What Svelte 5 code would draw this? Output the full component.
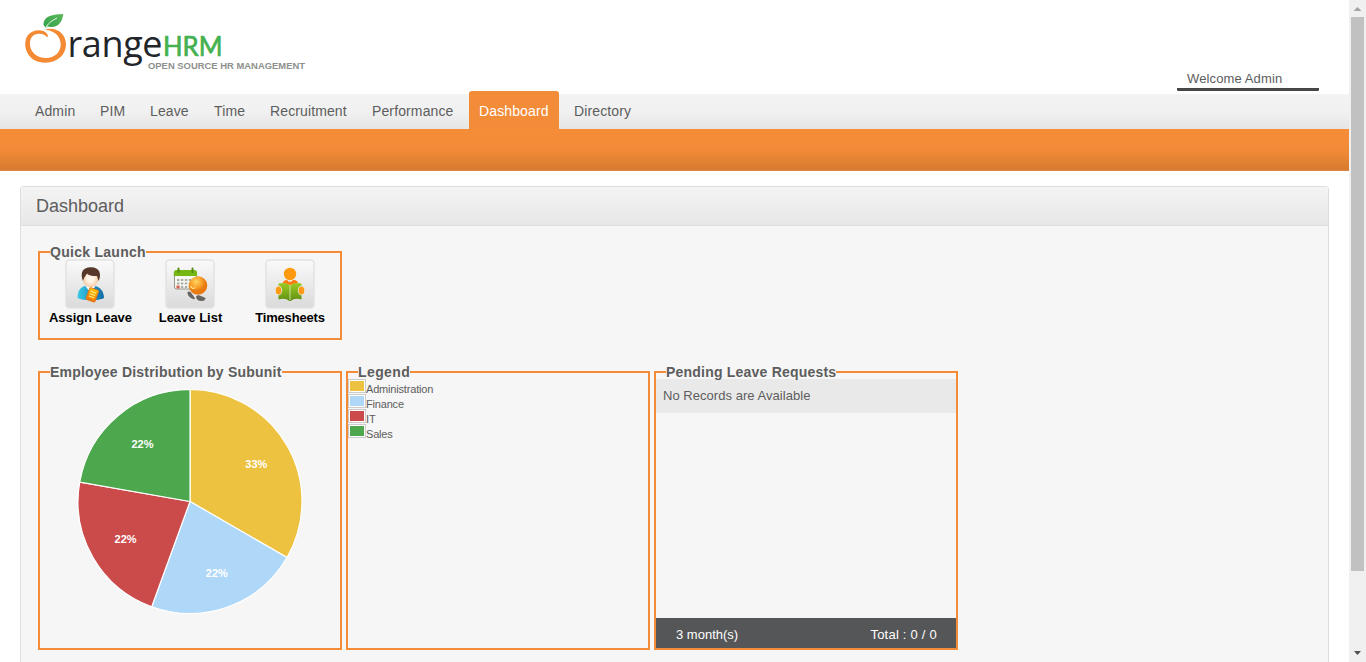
<script>
  const menu = [
    { label: 'Admin', w: 60 },
    { label: 'PIM', w: 45 },
    { label: 'Leave', w: 59 },
    { label: 'Time', w: 51 },
    { label: 'Recruitment', w: 97 },
    { label: 'Performance', w: 102 },
    { label: 'Dashboard', w: 90, active: true },
    { label: 'Directory', w: 77 }
  ];
  const units = [
    { name: 'Administration', color: '#edc240', count: 3 },
    { name: 'Finance', color: '#afd8f8', count: 2 },
    { name: 'IT', color: '#cb4b4b', count: 2 },
    { name: 'Sales', color: '#4da74d', count: 2 }
  ];
  const total = units.reduce((sum, u) => sum + u.count, 0);
  const point = (angle, r) => [
    113 + r * Math.sin(angle * 2 * Math.PI),
    112.5 - r * Math.cos(angle * 2 * Math.PI)
  ];
  let start = 0;
  const slices = units.map((u) => {
    const end = start + u.count / total;
    const [x1, y1] = point(start, 112);
    const [x2, y2] = point(end, 112);
    const [tx, ty] = point((start + end) / 2, 75.5);
    start = end;
    return {
      ...u, tx, ty,
      d: `M113 112.5L${x1} ${y1}A112 112 0 0 1 ${x2} ${y2}Z`,
      label: Math.floor((u.count / total) * 100) + '%'
    };
  });
</script>

<div class="window">
  <div class="page">
    <header>
      <svg class="logo" width="300" height="76" viewBox="0 0 300 76">
        <defs>
          <linearGradient id="leaf" x1="0" y1="1" x2="1" y2="0"><stop stop-color="#2fa04a" /><stop offset="1" stop-color="#5cb85a" /></linearGradient>
        </defs>
        <path fill="#f58a35" d="M32.500 37.500C33.500 35.500 32.500 33 29 31.300C24 29 17 30 13 35C9.500 39.500 9.500 47 12 52C15 59 22 62.700 30.500 62.700C42.500 62.700 51 54.500 51 44.500C51 35.500 44.500 28.800 35 28.800C33 28.800 31 29 29.800 29.600C38 30.500 45.500 35.500 45.700 44C45.800 52.500 39.500 58 31 58C22 58 15.500 52.500 15 44.500C14.600 37.500 18.500 33.800 24 33.800C28 33.800 30.500 35.200 32.500 37.500Z" />
        <path fill="url(#leaf)" d="M28.500 25C28 17 36 14.200 48.200 14C47.500 22 43 28.800 32 26.500L31 28Z" />
        <path fill="none" stroke="#fff" stroke-width=".9" d="M31 27C34 22.500 37 20.500 42 18" />
        <text class="word" x="52.500" y="57" textLength="95">range</text>
        <text class="hrm" x="148" y="56.200" textLength="59.500" lengthAdjust="spacingAndGlyphs">HRM</text>
        <text class="tagline" x="133" y="68.600" textLength="157" lengthAdjust="spacingAndGlyphs">OPEN SOURCE HR MANAGEMENT</text>
      </svg>
      <div class="welcome">Welcome Admin</div>
    </header>
    <nav>
      {#each menu as item}
        <a class:active={item.active} style:width="{item.w}px">{item.label}</a>
      {/each}
    </nav>
    <div class="submenu"></div>
    <main>
      <h1>Dashboard</h1>
      <div class="inner">
        <fieldset class="quick">
          <legend>Quick Launch</legend>
          <div class="launchers">
            <div class="launcher">
              <svg width="50" height="50" viewBox="0 0 50 50">
                <defs>
                  <linearGradient id="tile" x2="0" y2="1"><stop stop-color="#fafafa" /><stop offset="1" stop-color="#dadada" /></linearGradient>
                  <linearGradient id="shirt"><stop stop-color="#39c9e5" /><stop offset="1" stop-color="#126aa6" /></linearGradient>
                  <linearGradient id="card" x2="0" y2="1"><stop stop-color="#ffc20c" /><stop offset="1" stop-color="#ee7600" /></linearGradient>
                  <radialGradient id="face"><stop offset=".4" stop-color="#fff4e8" /><stop offset="1" stop-color="#f5c9a3" /></radialGradient>
                </defs>
                <rect x="1" y="1" width="48" height="48" rx="3.500" fill="url(#tile)" stroke="#e2e2df" stroke-width="1.500" />
                <path fill="url(#shirt)" d="M12.500 39C12.500 30 17 27.500 22 26.500L29 26.500C35 28 38.800 32 39 39C34 42 18 42 12.500 39Z" />
                <path fill="#fff" d="M20.500 27L25.500 34L30.500 27Z" />
                <ellipse cx="25.500" cy="19.500" rx="7.800" ry="9" fill="url(#face)" />
                <path fill="#573729" d="M18 22C14.500 13 18.500 8 26 8.200C34.500 8.300 37 15 33.500 22L32 17C28 17.300 24 16.500 22 14.500C20.500 17 19 18 18 22Z" />
                <g transform="rotate(20 27 36)"><rect x="22.500" y="29.500" width="9.500" height="12.500" rx="1" fill="url(#card)" stroke="#df6e14" stroke-width=".8" /><path stroke="#fff38a" stroke-width="1.100" d="M24.500 33H30M24.500 35.500H30M24.500 38H30" /></g>
              </svg>
              <span style:letter-spacing="-0.08px">Assign Leave</span>
            </div>
            <div class="launcher">
              <svg width="50" height="50" viewBox="0 0 50 50">
                <defs><radialGradient id="ball" cx=".4" cy=".3"><stop stop-color="#ffd565" /><stop offset=".6" stop-color="#f7a22a" /><stop offset="1" stop-color="#e97a11" /></radialGradient></defs>
                <rect x="1" y="1" width="48" height="48" rx="3.500" fill="url(#tile)" stroke="#e2e2df" stroke-width="1.500" />
                <rect x="9.500" y="12" width="22" height="18" rx="2" fill="#f6f7f1" stroke="#929887" />
                <path fill="#76b713" d="M8.800 17V13.500Q8.800 11 12 11H29Q32 11 32 13.500V17Z" />
                <path stroke="#558b0e" stroke-width="2" stroke-linecap="round" d="M13.500 9.500V13M27.500 9.500V13" />
                <path stroke="#aaaca7" stroke-width="2" stroke-dasharray="2.400 1.500" d="M12 21H31M12 24.500H31M12 28H31" />
                <rect x="11.500" y="26.500" width="3" height="3" fill="#dd6150" />
                <circle cx="33" cy="26.500" r="9.300" fill="url(#ball)" />
                <path fill="none" stroke="#ffe08d" stroke-width="1.300" d="M25.500 27Q27 31 30.500 28.500" />
                <g fill="#68655f"><path d="M22.500 33Q25 31.500 27 35L29.500 38.500Q31 41 28 40Q22 37.500 22.500 33Z" /><path d="M31 37.500Q33 35.500 36 37L40.500 39Q40.500 42 36.500 42Q31.500 42 31 37.500Z" /></g>
              </svg>
              <span>Leave List</span>
            </div>
            <div class="launcher">
              <svg width="50" height="50" viewBox="0 0 50 50">
                <defs><linearGradient id="book" x2="0" y2="1"><stop stop-color="#9dcc24" /><stop offset="1" stop-color="#5f8f10" /></linearGradient></defs>
                <rect x="1" y="1" width="48" height="48" rx="3.500" fill="url(#tile)" stroke="#e2e2df" stroke-width="1.500" />
                <circle cx="25" cy="15" r="6.200" fill="#ff9910" />
                <path fill="#ff7910" d="M17.500 24Q19 20.500 22 21Q25 25 28 21Q32 20.500 33 24L25 26Z" />
                <path fill="url(#book)" d="M13.500 24.500Q20 23 25 26Q30 23 36.500 24.500V40.500Q30 38.500 25.500 42H24.500Q20 38.500 13.500 40.500Z" />
                <path stroke="#edf3d8" stroke-width=".7" d="M25 26V41" />
                <g fill="#ff9a12" stroke="#eee" stroke-width=".8"><ellipse cx="13.500" cy="31.500" rx="3.200" ry="4.300" /><ellipse cx="36.500" cy="31.500" rx="3.200" ry="4.300" /></g>
              </svg>
              <span style:letter-spacing="-0.17px">Timesheets</span>
            </div>
          </div>
        </fieldset>
        <div class="row">
          <fieldset>
            <legend class="wide">Employee Distribution by Subunit</legend>
            <svg class="pie" width="226" height="225" viewBox="0 0 226 225">
              {#each slices as s}
                <path d={s.d} fill={s.color} stroke="#fff" stroke-width="1.200" />
              {/each}
              {#each slices as s}
                <text x={s.tx + 1} y={s.ty + 4.2} text-anchor="middle">{s.label}</text>
              {/each}
            </svg>
          </fieldset>
          <fieldset>
            <legend class="key">Legend</legend>
            <ul>
              {#each units as u}
                <li><i style:background-color={u.color}></i><span>{u.name}</span></li>
              {/each}
            </ul>
          </fieldset>
          <fieldset>
            <legend class="wide">Pending Leave Requests</legend>
            <div class="pending">
              <div class="empty">No Records are Available</div>
              <div class="totals"><span>3 month(s)</span><span class="sum">Total : 0 / 0</span></div>
            </div>
          </fieldset>
        </div>
      </div>
    </main>
  </div>
  <div class="scrollbar">
    <svg width="17" height="17"><path fill="#a3a3a3" d="M4.500 11L8.500 7L12.500 11Z" /></svg>
    <div class="thumb"></div>
    <svg width="17" height="17"><path fill="#505050" d="M5 6H12L8.500 10Z" /></svg>
  </div>
</div>

<style>
  :global(body) { overflow: hidden; background: #fff; }
  .window { display: flex; width: 1366px; height: 662px; overflow: hidden; font-family: "Liberation Sans", Arial, sans-serif; color: #5d5d5d; }
  .page { width: 1349px; height: 662px; overflow: hidden; }
  header { display: flex; justify-content: space-between; height: 94px; padding: 0 30px 0 15px; box-sizing: border-box; }
  .logo { display: block; }
  .word { font: 36px "Open Sans", sans-serif; fill: #222529; }
  .hrm { font: 27px Lato, sans-serif; fill: #45b150; stroke: #45b150; stroke-width: .7px; }
  .tagline { font: bold 9.5px "Liberation Sans", Arial, sans-serif; fill: #8e908d; }
  .welcome { width: 142px; height: 20px; margin-top: 71px; padding-left: 10px; box-sizing: border-box; border-bottom: 3px solid #474747; border-radius: 1px; font-size: 13px; line-height: 15px; letter-spacing: .12px; white-space: nowrap; }
  nav { display: flex; gap: 5px; height: 35px; padding-left: 25px; background: linear-gradient(#f3f3f3, #f1f1f1 50%, #e5e5e5); }
  nav a { height: 35px; padding-left: 10px; box-sizing: border-box; font-size: 14px; line-height: 34px; letter-spacing: .12px; white-space: nowrap; }
  nav a.active { height: 38px; margin-top: -3px; padding-top: 3px; color: #fff; background: #f38c38; border-radius: 3px 3px 0 0; }
  .submenu { height: 42px; box-sizing: border-box; background: linear-gradient(#f58c38, #f28b38 50%, #d87a2f); border-bottom: 1px solid #d98a47; }
  main { height: 520px; margin: 15px 20px 0; border: 1px solid #dedede; border-radius: 3px; box-sizing: border-box; background: #f6f6f6; }
  h1 { height: 39px; margin: 0; padding-left: 15px; box-sizing: border-box; border-bottom: 1px solid #dedede; background: linear-gradient(#f4f4f4, #e7e7e7); font-size: 18px; font-weight: 400; line-height: 38px; }
  .inner { padding: 18px 17px; }
  fieldset { width: 304px; height: 286px; margin: 0; padding: 0; border: 2px solid #f28c38; box-sizing: border-box; min-width: 0; }
  legend { position: relative; z-index: 1; height: 16px; margin-left: 10px; padding: 0; font-size: 14px; font-weight: 700; line-height: 16px; letter-spacing: .28px; white-space: nowrap; }
  legend.wide { letter-spacing: .21px; }
  legend.key { letter-spacing: .4px; }
  .quick { height: 96px; }
  .launchers { display: grid; grid-template-columns: repeat(3, 100px); margin-top: -1px; }
  .launcher { display: flex; flex-direction: column; align-items: center; color: #000; font-size: 13px; font-weight: 700; line-height: 18px; white-space: nowrap; }
  .launcher span { padding-left: 1px; }
  .launcher:last-child span { padding-left: 0; }
  .row { display: flex; gap: 4px; margin-top: 24px; }
  .pie { display: block; margin: 9px 0 0 37px; }
  .pie text { fill: #fff; font: bold 11px "Liberation Sans", Arial, sans-serif; }
  ul { margin: -1px 0 0; padding: 0; list-style: none; }
  li { display: flex; height: 15px; font-size: 11px; letter-spacing: -.18px; }
  li i { width: 18px; height: 14px; padding: 1px; box-sizing: border-box; border: 1px solid #ccc; background-clip: content-box; box-shadow: inset 0 0 0 1px #fff; }
  li span { padding-top: 4px; line-height: 13px; }
  .pending { display: flex; flex-direction: column; justify-content: space-between; height: 269px; margin-top: -1px; }
  .empty { height: 34px; padding-left: 7px; background: #e9e9e9; font-size: 13px; line-height: 33px; letter-spacing: .04px; }
  .totals { display: flex; justify-content: space-between; height: 30px; padding: 0 19px 0 20px; color: #fff; background: #555658; font-size: 13px; line-height: 33px; }
  .sum { letter-spacing: .23px; }
  .scrollbar { display: flex; flex-direction: column; align-items: center; width: 17px; background: #f0f0f0; }
  .thumb { width: 13px; height: 554px; margin-bottom: 74px; background: #c1c1c1; }
</style>
